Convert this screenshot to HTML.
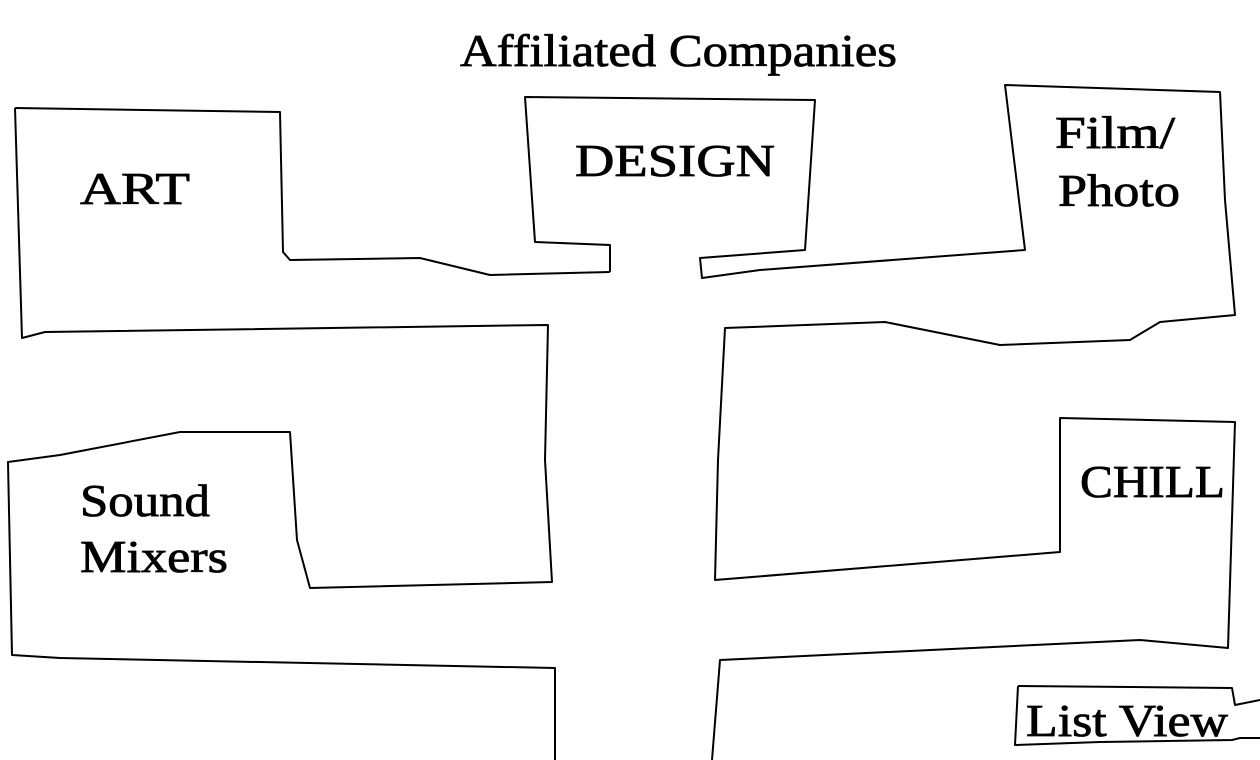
<!DOCTYPE html>
<html><head><meta charset="utf-8"><style>
html,body{margin:0;padding:0;background:#fff;width:1260px;height:760px;overflow:hidden}
svg{display:block}
text{font-family:"Liberation Serif",serif;fill:#000;stroke:#000;stroke-width:0.8}
</style></head><body>
<svg width="1260" height="760" viewBox="0 0 1260 760">
<g fill="none" stroke="#000" stroke-width="2" stroke-linejoin="round">
<polyline points="15,108 280,112 283,252 290,260 420,258 490,275 610,272"/>
<polyline points="15,108 22,338 45,332 548,325 545,460 552,582 310,588 297,540 290,432 180,432 60,455 8,462 12,655 60,658 555,668 555,760"/>
<polyline points="610,272 610,245 535,242 525,97 815,100 805,250 700,258 702,278 760,270 1025,250 1005,85 1220,92 1225,200 1235,315 1160,322 1130,340 1000,345 885,322 725,328 718,460 715,580 1060,552 1060,418 1235,422 1228,648 1140,640 720,660 712,760"/>
<polyline points="1018,686 1232,688 1235,705 1260,700"/>
<polyline points="1018,686 1015,745 1100,742 1232,740 1240,738 1260,738"/>
</g>
<text x="460" y="66" font-size="46" textLength="437" lengthAdjust="spacingAndGlyphs">Affiliated Companies</text>
<text x="80" y="204" font-size="46" textLength="110" lengthAdjust="spacingAndGlyphs">ART</text>
<text x="575" y="176" font-size="46" textLength="200" lengthAdjust="spacingAndGlyphs">DESIGN</text>
<text x="1055" y="148" font-size="46" textLength="120" lengthAdjust="spacingAndGlyphs">Film/</text>
<text x="1058" y="206" font-size="46" textLength="122" lengthAdjust="spacingAndGlyphs">Photo</text>
<text x="1080" y="497" font-size="46" textLength="145" lengthAdjust="spacingAndGlyphs">CHILL</text>
<text x="80" y="516" font-size="46" textLength="130" lengthAdjust="spacingAndGlyphs">Sound</text>
<text x="80" y="572" font-size="46" textLength="148" lengthAdjust="spacingAndGlyphs">Mixers</text>
<text x="1026" y="736" font-size="46" textLength="202" lengthAdjust="spacingAndGlyphs">List View</text>
</svg>
</body></html>
